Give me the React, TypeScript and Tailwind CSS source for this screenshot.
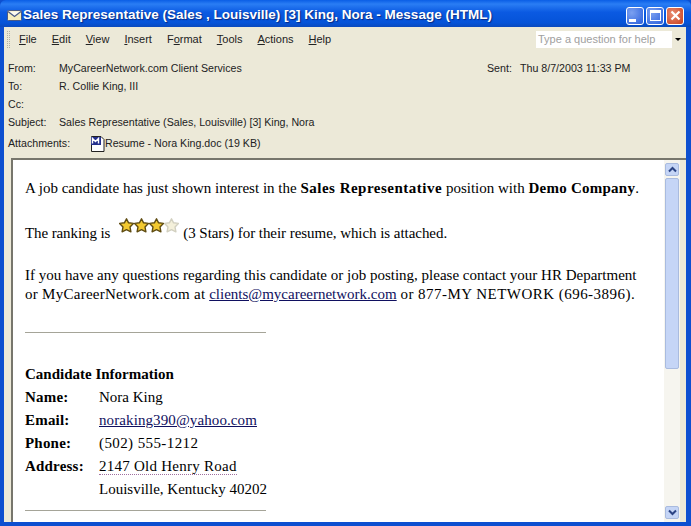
const uiFont = "font-['Liberation_Sans',sans-serif]";

const menuItems = [
  { label: "File", key: "F", rest: "ile" },
  { label: "Edit", key: "E", rest: "dit" },
  { label: "View", key: "V", rest: "iew" },
  { label: "Insert", key: "I", rest: "nsert" },
  { label: "Format", pre: "F", key: "o", rest: "rmat" },
  { label: "Tools", key: "T", rest: "ools" },
  { label: "Actions", key: "A", rest: "ctions" },
  { label: "Help", key: "H", rest: "elp" },
];

const Star = ({ on }: { on: boolean }) => (
  <svg width="15" height="15" viewBox="0 0 15 15" className="block">
    <polygon
      points="7.5,0.8 9.6,4.8 14.4,5.4 11,8.9 11.9,13.8 7.5,11.6 3.1,13.8 4,8.9 0.6,5.4 5.4,4.8"
      fill={on ? "#f3c92f" : "#f4f0da"}
      stroke={on ? "#5f4c12" : "#d2d0c0"}
      strokeWidth="1.4"
      strokeLinejoin="round"
    />
  </svg>
);

const EnvelopeIcon = () => (
  <svg width="15" height="11" viewBox="0 0 15 11">
    <rect x="0.5" y="0.5" width="14" height="10" rx="1" fill="#f6edbe" stroke="#4a5a86" />
    <path d="M1 1.5 L7.5 6.5 L14 1.5" fill="#fdfbf0" stroke="#4a5a86" strokeWidth="1.3" />
  </svg>
);

const WordIcon = () => (
  <svg width="15" height="16" viewBox="0 0 15 16">
    <path d="M1.5 0.5 H11 L14 3.5 V15.5 H1.5 Z" fill="#fff" stroke="#222" />
    <rect x="1" y="1" width="10" height="8" fill="#24308c" />
    <path d="M2.5 7.5 V2.5 L5.5 5.5 L8.5 2.5 V7.5" fill="none" stroke="#fff" strokeWidth="1.4" />
  </svg>
);

const WinButton = ({ kind }: { kind: "min" | "max" | "close" }) => (
  <div
    className={`flex h-[18px] w-[18px] items-center justify-center rounded-[3px] border border-white ${
      kind === "close"
        ? "bg-[radial-gradient(circle_at_35%_35%,#e88a70,#c8401e)]"
        : "bg-[radial-gradient(circle_at_30%_30%,#7ba0f0,#2a5fdc)]"
    }`}
  >
    {kind === "min" && <div className="mt-[9px] mr-[5px] h-[3px] w-[7px] bg-white" />}
    {kind === "max" && <div className="h-[11px] w-[11px] border border-t-[3px] border-white" />}
    {kind === "close" && (
      <svg width="11" height="11" viewBox="0 0 11 11">
        <path d="M1.5 1.5 L9.5 9.5 M9.5 1.5 L1.5 9.5" stroke="#fff" strokeWidth="2.2" />
      </svg>
    )}
  </div>
);

const HeaderRow = ({ label, value }: { label: string; value?: string }) => (
  <div className="flex h-[18px] items-center">
    <div className="w-[51px] text-[#222]">{label}</div>
    <div className="text-[#222]">{value}</div>
  </div>
);

const ScrollArrow = ({ up }: { up: boolean }) => (
  <div className="flex h-[13px] w-[14px] items-center justify-center rounded-[2px] border border-[#a9bbdf] bg-[#c5d5f6]">
    <svg width="9" height="7" viewBox="0 0 9 7">
      <path d={up ? "M1 5.5 L4.5 2 L8 5.5" : "M1 1.5 L4.5 5 L8 1.5"} fill="none" stroke="#2b4484" strokeWidth="2" />
    </svg>
  </div>
);

const InfoRow = ({ label, children }: { label?: string; children: React.ReactNode }) => (
  <div className="flex h-[23px] items-center">
    <div className="w-[74px] font-bold tracking-[0.2px]">{label}</div>
    <div>{children}</div>
  </div>
);

export default function App() {
  return (
    <div className={`flex h-[526px] w-[691px] flex-col overflow-hidden bg-[#0d4fd0] text-[11px] ${uiFont}`}>
      {/* title bar */}
      <div className="flex h-[27px] shrink-0 items-center rounded-t-[6px] bg-[linear-gradient(#0a5ee6,#2a7df4_15%,#0b5ae2_45%,#0553d8_85%,#0a49bd)] pt-[4px] pr-[7px] pl-[7px]">
        <EnvelopeIcon />
        <div className="ml-[1px] flex-1 text-[13.5px] font-bold whitespace-nowrap text-white [text-shadow:1px_1px_1px_#0a2a80]">
          Sales Representative (Sales , Louisville) [3] King, Nora - Message (HTML)
        </div>
        <div className="flex gap-[2px]">
          <WinButton kind="min" />
          <WinButton kind="max" />
          <WinButton kind="close" />
        </div>
      </div>

      {/* window frame */}
      <div className="flex min-h-0 flex-1 flex-col pr-[5px] pb-[4px] pl-[4px]">
        <div className="flex min-h-0 flex-1 flex-col bg-[#ece9d8]">
          {/* menu */}
          <div className="flex h-[25px] shrink-0 items-center pr-[2px] pl-[3px]">
            <div className="h-[17px] w-[3px] border-x border-dotted border-[#b5b2a2]" />
            <div className="ml-[9px] flex flex-1 gap-[15px] text-[#222]">
              {menuItems.map((m) => (
                <span key={m.label}>
                  {m.pre}
                  <span className="underline">{m.key}</span>
                  {m.rest}
                </span>
              ))}
            </div>
            <div className="flex h-[17px] w-[148px] items-center bg-white pl-[2px] text-[#a0a0a0]">
              <span className="flex-1">Type a question for help</span>
              <div className="flex h-full w-[12px] items-center justify-center bg-[#ece9d8]">
                <div className="h-0 w-0 border-x-[3px] border-t-[3px] border-x-transparent border-t-black" />
              </div>
            </div>
          </div>

          {/* message header */}
          <div className="shrink-0 pt-[8px] pl-[4px] text-[10.65px]">
            <div className="flex">
              <div className="w-[479px]">
                <HeaderRow label="From:" value="MyCareerNetwork.com Client Services" />
              </div>
              <div className="flex h-[18px] items-center text-[#222]">
                <span className="w-[33px]">Sent:</span>
                <span>Thu 8/7/2003 11:33 PM</span>
              </div>
            </div>
            <HeaderRow label="To:" value="R. Collie King, III" />
            <HeaderRow label="Cc:" />
            <HeaderRow label="Subject:" value="Sales Representative (Sales, Louisville) [3] King, Nora" />
            <div className="mt-[3px] flex h-[18px] items-center text-[#222]">
              <div className="w-[82px]">Attachments:</div>
              <WordIcon />
              <span>Resume - Nora King.doc (19 KB)</span>
            </div>
          </div>

          {/* body */}
          <div className="mt-[5px] ml-[7px] flex min-h-0 flex-1 border-t-2 border-l-2 border-t-[#77766c] border-l-[#77766c]">
            <div className="min-w-0 flex-1 bg-white pt-[19px] pl-[12px] font-['Liberation_Serif',serif] text-[15px] leading-[19px] text-black">
              <p className="whitespace-nowrap">
                A job candidate has just shown interest in the <b className="tracking-[0.5px]">Sales Representative</b>{" "}
                position with <b className="tracking-[0.25px]">Demo Company</b>.
              </p>
              <div className="mt-[26px] flex h-[19px] items-center whitespace-nowrap">
                <span className="tracking-[-0.1px]">The ranking is</span>
                <div className="mb-[17px] ml-[9px] flex">
                  <Star on />
                  <Star on />
                  <Star on />
                  <Star on={false} />
                </div>
                <span className="ml-[4px] tracking-[-0.05px]">(3 Stars) for their resume, which is attached.</span>
              </div>
              <p className="mt-[23px] whitespace-nowrap">
                If you have any questions regarding this candidate or job posting, please contact your HR Department
                <br />
                <span className="tracking-[0.27px]">or MyCareerNetwork.com at</span>{" "}
                <span className="text-[#101060] underline">clients@mycareernetwork.com</span>{" "}
                <span className="tracking-[0.47px]">or 877-MY NETWORK (696-3896).</span>
              </p>
              <hr className="mt-[28px] w-[241px] border-t border-[#a5a498]" />
              <div className="mt-[32px] font-bold">Candidate Information</div>
              <div className="mt-[2px]">
                <InfoRow label="Name:">Nora King</InfoRow>
                <InfoRow label="Email:">
                  <span className="tracking-[0.1px] text-[#101060] underline">noraking390@yahoo.com</span>
                </InfoRow>
                <InfoRow label="Phone:">
                  <span className="tracking-[0.4px]">(502) 555-1212</span>
                </InfoRow>
                <InfoRow label="Address:">
                  <span className="border-b border-dotted border-[#a070a0] tracking-[0.25px]">2147 Old Henry Road</span>
                </InfoRow>
                <InfoRow>Louisville, Kentucky 40202</InfoRow>
              </div>
              <hr className="mt-[9px] w-[241px] border-t border-[#a5a498]" />
            </div>

            {/* scrollbar */}
            <div className="flex w-[22px] shrink-0 flex-col items-start border-r-[6px] border-[#ece9d8] bg-[#f6f5ef] pt-[3px] pb-[3px] pl-[1px]">
              <ScrollArrow up />
              <div className="mt-[2px] h-[191px] w-[14px] rounded-[2px] border border-[#a9bbdf] bg-[#c5d5f6]" />
              <div className="flex-1" />
              <ScrollArrow up={false} />
            </div>
          </div>
        </div>
      </div>
    </div>
  );
}
